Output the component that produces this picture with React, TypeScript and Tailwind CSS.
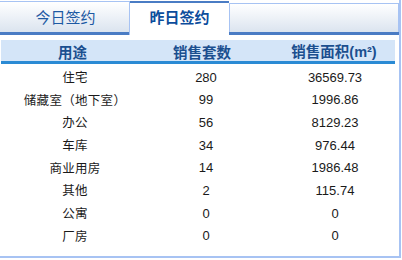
const rows = [
  { use: '住宅', count: '280', area: '36569.73' },
  { use: '储藏室（地下室）', count: '99', area: '1996.86' },
  { use: '办公', count: '56', area: '8129.23' },
  { use: '车库', count: '34', area: '976.44' },
  { use: '商业用房', count: '14', area: '1986.48' },
  { use: '其他', count: '2', area: '115.74' },
  { use: '公寓', count: '0', area: '0' },
  { use: '厂房', count: '0', area: '0' },
];

const cjk = { fontFamily: '"Noto Sans CJK SC", sans-serif' };
const num = { fontFamily: '"Liberation Sans", "Noto Sans CJK SC", sans-serif' };

export default function App() {
  return (
    <div className="h-[260px] w-[402px] bg-white">
      <div className="h-[258px] w-[401px] border-r-2 border-b-2 border-[#a7c3f3]">
        {/* 标签 */}
        <div className="flex h-[35px] items-end pt-[1px]">
          <div className="flex h-[34px] w-[130px] flex-col border-t border-r border-[#a7c3f3]">
            <div
              className="flex flex-1 items-center justify-center bg-gradient-to-b from-white to-[#dbe4ef] pl-[2px] text-[15px] text-[#1d5aa3]"
              style={cjk}
            >
              今日签约
            </div>
            <div className="h-[3px] bg-[#4a7cc4]" />
          </div>
          <div
            className="flex h-[34px] w-[99px] items-center justify-center border-t-2 border-[#4a7cc4] bg-white pb-[3px] text-[15px] font-bold text-[#0c4d9c]"
            style={cjk}
          >
            昨日签约
          </div>
          <div className="flex h-[32px] flex-1 flex-col">
            <div className="flex-1 border-t border-l border-r border-[#a7c3f3] bg-gradient-to-b from-white to-[#dbe4ef]" />
            <div className="h-[3px] bg-[#4a7cc4]" />
          </div>
        </div>

        {/* 表头 */}
        <div className="mt-[5px] ml-[1px] grid h-[24px] w-[394px] grid-cols-[143px_116px_135px] items-center border-b-[3px] border-[#2a8ad4] bg-[#d4e5f8] text-[14.5px] font-bold text-[#1b4f8f]">
          <div className="text-center" style={cjk}>用途</div>
          <div className="text-center" style={cjk}>销售套数</div>
          <div className="pl-[13px] text-center" style={num}>
            <span style={cjk}>销售面积</span>(m²)
          </div>
        </div>

        {/* 数据 */}
        <div className="pt-[2px]">
          {rows.map((r) => (
            <div
              key={r.use}
              className="grid h-[22.7px] grid-cols-[150px_112px_137px] items-center text-[13px] text-[#1a1a1a]"
            >
              <div className="text-center text-[12.5px] tracking-[0.3px]" style={cjk}>{r.use}</div>
              <div className="text-center" style={num}>{r.count}</div>
              <div className="pl-[9px] text-center" style={num}>{r.area}</div>
            </div>
          ))}
        </div>
      </div>
    </div>
  );
}
